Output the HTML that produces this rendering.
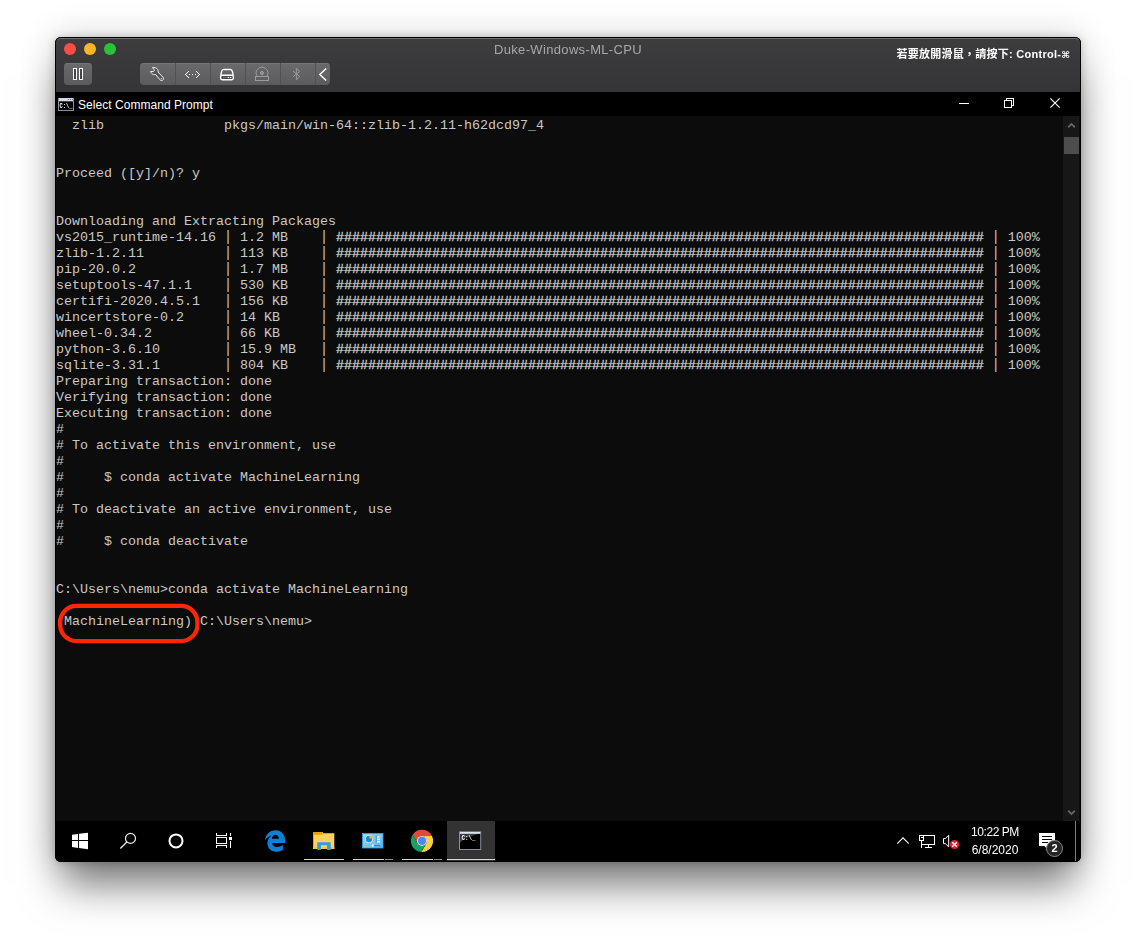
<!DOCTYPE html>
<html lang="zh-Hant">
<head>
<meta charset="utf-8">
<title>Duke-Windows-ML-CPU</title>
<style>
html,body{margin:0;padding:0;background:#fff;}
body{width:1136px;height:935px;position:relative;overflow:hidden;font-family:"Liberation Sans","Noto Sans CJK TC",sans-serif;}
#shadow{position:absolute;left:55px;top:37px;width:1026px;height:825px;border-radius:6px;background:#000;
  box-shadow:0 30px 39px -7px rgba(0,0,0,.5),0 0 8px rgba(0,0,0,.2),0 0 36px rgba(0,0,0,.16);}
#win{position:absolute;left:55px;top:37px;width:1026px;height:825px;border-radius:6px;background:#000;overflow:hidden;}
#mac{will-change:transform;position:absolute;left:1px;top:1px;width:1024px;height:54px;border-radius:5px 5px 0 0;background:linear-gradient(#3d3d3f,#343436);}
#machl{position:absolute;left:0;top:0;width:1024px;height:10px;border-top:1px solid #717173;border-radius:5px 5px 0 0;box-sizing:border-box;}
.tl{position:absolute;top:5px;width:12px;height:12px;border-radius:50%;}
#mtitle{position:absolute;left:0;width:1024px;top:4px;letter-spacing:0.34px;height:16px;line-height:16px;text-align:center;font-size:13px;color:#a8a8a9;}
#mhint{position:absolute;right:10px;top:8px;letter-spacing:0.26px;height:16px;line-height:16px;font-size:11px;font-weight:bold;color:#fff;white-space:nowrap;}
.tb{position:absolute;top:25px;height:22px;background:linear-gradient(#6a6a6c,#5b5b5d);box-shadow:inset 0 1px 0 #757577;}
.dv{position:absolute;top:25px;width:1px;height:22px;background:#515153;}
#wt{position:absolute;left:0;top:55px;width:1026px;height:24px;background:#000;}
#wtitle{position:absolute;left:23px;top:5px;letter-spacing:0.04px;height:16px;line-height:16px;font-size:12px;color:#fff;white-space:nowrap;}
#con{position:absolute;left:1px;top:79px;width:1024px;height:705px;background:#0c0c0c;}
#con pre{position:absolute;left:0;top:2px;margin:0;font-family:"Liberation Mono",monospace;font-size:13.33px;line-height:16px;color:#c8c8c8;white-space:pre;}
.h{-webkit-text-stroke:0.35px #c8c8c8;}
.p{display:inline-block;transform:translateY(1px) scaleY(1.167);transform-origin:50% 14px;}
#sb{position:absolute;left:1008px;top:79px;width:16px;height:705px;background:#171717;}
#thumb{position:absolute;left:1px;top:21px;width:15px;height:17px;background:#4d4d4d;}
#task{will-change:transform;position:absolute;left:0;top:784px;width:1026px;height:41px;background:#000;}
#cmdbtn{position:absolute;left:392px;top:0;width:48px;height:40px;background:#333;}
.ul{position:absolute;top:38px;height:1px;background:#d8d8d8;}
.ul2{position:absolute;top:38px;height:1px;background:#8e8e8e;}
.clk{position:absolute;left:905px;width:70px;height:16px;line-height:16px;font-size:12px;color:#fff;text-align:center;white-space:nowrap;}
#sd{position:absolute;left:1020px;top:0;width:1px;height:40px;background:#7c7c7c;}
#ov{position:absolute;left:0;top:0;width:1136px;height:935px;overflow:visible;}
#ov text{font-family:"Liberation Sans",sans-serif;}
</style>
</head>
<body>
<div id="shadow"></div>
<div id="win">
  <div id="mac">
    <div id="machl"></div>
    <div class="tl" style="left:8px;background:#fd4b45;"></div>
    <div class="tl" style="left:28px;background:#fdb526;"></div>
    <div class="tl" style="left:48px;background:#2ac13d;"></div>
    <div id="mtitle">Duke-Windows-ML-CPU</div>
    <div id="mhint">若要放開滑鼠，請按下: Control-<span style="font-family:'DejaVu Sans',sans-serif;font-size:9.5px;font-weight:bold;letter-spacing:0;">⌘</span></div>
    <div class="tb" style="left:8px;width:28px;border-radius:4px;"></div>
    <div class="tb" style="left:84px;width:190px;border-radius:4px;"></div>
    <div class="dv" style="left:119px;"></div>
    <div class="dv" style="left:154px;"></div>
    <div class="dv" style="left:189px;"></div>
    <div class="dv" style="left:224px;"></div>
    <div class="dv" style="left:259px;"></div>
  </div>
  <div id="wt">
    <div id="wtitle">Select Command Prompt</div>
  </div>
  <div id="con">
<pre>  zlib               pkgs/main/win-64::zlib-1.2.11-h62dcd97_4


Proceed ([y]/n)? y


Downloading and Extracting Packages
vs2015_runtime-14.16 <span class="p">|</span> 1.2 MB    <span class="p">|</span> <span class="h">#################################################################################</span> <span class="p">|</span> 100%
zlib-1.2.11          <span class="p">|</span> 113 KB    <span class="p">|</span> <span class="h">#################################################################################</span> <span class="p">|</span> 100%
pip-20.0.2           <span class="p">|</span> 1.7 MB    <span class="p">|</span> <span class="h">#################################################################################</span> <span class="p">|</span> 100%
setuptools-47.1.1    <span class="p">|</span> 530 KB    <span class="p">|</span> <span class="h">#################################################################################</span> <span class="p">|</span> 100%
certifi-2020.4.5.1   <span class="p">|</span> 156 KB    <span class="p">|</span> <span class="h">#################################################################################</span> <span class="p">|</span> 100%
wincertstore-0.2     <span class="p">|</span> 14 KB     <span class="p">|</span> <span class="h">#################################################################################</span> <span class="p">|</span> 100%
wheel-0.34.2         <span class="p">|</span> 66 KB     <span class="p">|</span> <span class="h">#################################################################################</span> <span class="p">|</span> 100%
python-3.6.10        <span class="p">|</span> 15.9 MB   <span class="p">|</span> <span class="h">#################################################################################</span> <span class="p">|</span> 100%
sqlite-3.31.1        <span class="p">|</span> 804 KB    <span class="p">|</span> <span class="h">#################################################################################</span> <span class="p">|</span> 100%
Preparing transaction: done
Verifying transaction: done
Executing transaction: done
#
# To activate this environment, use
#
#     $ conda activate MachineLearning
#
# To deactivate an active environment, use
#
#     $ conda deactivate


C:\Users\nemu&gt;conda activate MachineLearning

(MachineLearning) C:\Users\nemu&gt;</pre>
  </div>
  <div id="sb"><div id="thumb"></div></div>
  <div id="task">
    <div id="cmdbtn"></div>
    <div class="ul" style="left:249px;width:40px;"></div>
    <div class="ul" style="left:298px;width:31px;"></div><div class="ul2" style="left:330px;width:8px;"></div>
    <div class="ul" style="left:347px;width:31px;"></div><div class="ul2" style="left:379px;width:8px;"></div>
    <div class="ul" style="left:392px;width:48px;"></div>
    <div class="clk" style="top:3px;letter-spacing:-0.45px;">10:22 PM</div>
    <div class="clk" style="top:21px;">6/8/2020</div>
    <div id="sd"></div>
  </div>
</div>
<svg id="ov" viewBox="0 0 1136 935" width="1136" height="935">
<!--ICONS-->
<!-- mac toolbar: pause -->
<g fill="#454547" stroke="#fff" stroke-width="1">
  <rect x="73.5" y="68.5" width="3" height="11"/>
  <rect x="79.5" y="68.5" width="3" height="11"/>
</g>
<!-- wrench -->
<path d="M152.3,67.6 C154,67.2 156.6,67.6 157.7,69.6 C158.2,70.6 158.2,71.4 158.1,72.1 L163,77.3 C163.8,78.2 163.7,79.4 162.9,80.1 C162.1,80.8 160.7,80.7 160,79.8 L155.7,74.5 C154.2,74.7 152.7,74.4 151.6,73.3 C151,72.7 150.6,72 150.5,71.6 L153.6,71.5 C154.5,70.9 154.6,69.9 154.1,69.3 Z" fill="#545456" stroke="#f2f2f2" stroke-width="1" stroke-linejoin="round"/>
<circle cx="161.45" cy="78.55" r="0.6" fill="#fff"/>
<!-- <..> -->
<g fill="#fff" shape-rendering="crispEdges">
  <rect x="185" y="74" width="1" height="1"/><rect x="186" y="73" width="1" height="1"/><rect x="187" y="72" width="1" height="1"/><rect x="188" y="71" width="1" height="1"/>
  <rect x="186" y="75" width="1" height="1"/><rect x="187" y="76" width="1" height="1"/><rect x="188" y="77" width="1" height="1"/>
  <rect x="189" y="74" width="1" height="1"/><rect x="192" y="74" width="1" height="1"/><rect x="195" y="74" width="1" height="1"/>
  <rect x="199" y="74" width="1" height="1"/><rect x="198" y="73" width="1" height="1"/><rect x="197" y="72" width="1" height="1"/><rect x="196" y="71" width="1" height="1"/>
  <rect x="198" y="75" width="1" height="1"/><rect x="197" y="76" width="1" height="1"/><rect x="196" y="77" width="1" height="1"/>
</g>
<!-- drive -->
<g fill="none" stroke="#fff" stroke-width="1.4" stroke-linejoin="round">
  <path d="M220.8,75.3 C221.2,72.5 221.8,69.5 223.4,69.5 H230.6 C232.2,69.5 232.8,72.5 233.2,75.3"/>
  <rect x="220.6" y="75.3" width="12.8" height="4.4" rx="1.6" fill="#4a4a4c"/>
</g>
<circle cx="228.4" cy="77.5" r="0.8" fill="#fff"/><circle cx="230.6" cy="77.5" r="0.8" fill="#fff"/>
<rect x="223" y="77" width="4" height="1" fill="#6a6a6c"/>
<!-- cd -->
<g fill="none" stroke="#9b9b9d" stroke-width="1">
  <path d="M257,76 A5.8,5.8 0 1 1 267,76"/>
  <circle cx="262" cy="73" r="1.6" fill="#8a8a8c"/>
  <rect x="255.5" y="76.5" width="13" height="4"/>
</g>
<!-- bluetooth -->
<path d="M293,71.2 L299.8,76.6 L296.4,79.8 V68.3 L299.8,71.5 L293,76.8" fill="none" stroke="#9a9a9c" stroke-width="1" stroke-linejoin="miter"/>
<!-- chevron -->
<path d="M326.2,68.4 L319.8,74.5 L326.2,80.6" fill="none" stroke="#fff" stroke-width="1.4"/>

<!-- cmd title icon -->
<rect x="58" y="98" width="16" height="13" fill="#8b8e95"/>
<rect x="59" y="98" width="14" height="3" fill="#d3d8e2"/>
<rect x="68" y="99" width="1" height="1" fill="#6f7c9a"/><rect x="70" y="99" width="1" height="1" fill="#6f7c9a"/><rect x="72" y="99" width="1" height="1" fill="#6f7c9a"/>
<rect x="59" y="101.5" width="14" height="8.5" fill="#000"/>
<text x="59.6" y="108.3" font-size="7.5" font-weight="bold" fill="#fff" style="font-family:'Liberation Mono',monospace" textLength="13" lengthAdjust="spacingAndGlyphs">C:\_</text>

<!-- window buttons -->
<g shape-rendering="crispEdges" fill="none" stroke="#fff" stroke-width="1">
  <path d="M959,103.5 H969"/>
  <rect x="1004.5" y="100.5" width="7" height="7"/>
  <path d="M1006.5,100 V98.5 H1013.5 V105.5 H1012"/>
</g>
<path d="M1050.3,98.3 L1059.7,107.7 M1059.7,98.3 L1050.3,107.7" stroke="#fff" stroke-width="1.1" fill="none"/>

<!-- scrollbar arrows -->
<path d="M1068.2,127.3 L1071.5,124 L1074.8,127.3" fill="none" stroke="#6a6a6a" stroke-width="1.7"/>
<path d="M1068.2,810.7 L1071.5,814 L1074.8,810.7" fill="none" stroke="#6a6a6a" stroke-width="1.7"/>

<!-- start -->
<g fill="#fff">
  <path d="M72,834.8 L78,833.95 V840 H72 Z"/>
  <path d="M79,833.8 L88,832.7 V840 H79 Z"/>
  <path d="M72,841 H78 V847.95 L72,847.1 Z"/>
  <path d="M79,841 H88 V849.2 L79,848.1 Z"/>
</g>
<!-- search -->
<g fill="none" stroke="#ececec" stroke-width="1.2">
  <circle cx="130.5" cy="838.4" r="5"/>
  <path d="M126.8,842 L120.4,848.5"/>
</g>
<!-- cortana -->
<circle cx="176" cy="840.9" r="6.5" fill="none" stroke="#fff" stroke-width="2"/>
<!-- task view -->
<g fill="none" stroke="#fff" stroke-width="1" shape-rendering="crispEdges">
  <path d="M216.5,833 V835.5 H226.5 V833"/>
  <rect x="216.5" y="837.5" width="10" height="6"/>
  <path d="M216.5,848 V845.5 H226.5 V848"/>
  <path d="M230.5,833 V836 M230.5,841 V848"/>
</g>
<rect x="229" y="837" width="3" height="3" fill="#fff"/>
<!-- edge -->
<path fill-rule="evenodd" fill="#0a82dc" d="M265,839.9 C265.6,835 269.5,830.2 275.5,830.2 C281.5,830.2 285.1,834.5 285.1,840.5 V843 H272.1 C272.4,845.5 274.4,846.9 277,846.9 C279.2,846.9 281.2,846.2 282.9,845 V850 C281,851.1 278.8,851.7 276.3,851.7 C270.8,851.7 267.4,848 267.4,843 C267.4,840 268.8,837.3 271.8,835.4 C268.8,836.2 266.5,837.8 265,839.9 Z M271.9,838.7 H278.9 C278.8,836.3 277.5,834.7 275.3,834.7 C273.3,834.7 272.2,836.5 271.9,838.7 Z"/>
<!-- folder -->
<path d="M313.2,832.6 Q313.2,832 313.8,832 H322.2 L323.4,833.2 H334.3 V849 H313.2 Z" fill="#ffd25c"/>
<path d="M313.2,832.6 Q313.2,832 313.8,832 H322.2 L323.4,833.2 L321.6,834.8 H313.2 Z" fill="#eaa300"/>
<rect x="313.2" y="847" width="21.1" height="2" fill="#fcc63a"/>
<path d="M317.2,849.9 V843.2 Q317.2,842.2 318.2,842.2 H329.8 Q330.8,842.2 330.8,843.2 V849.9 H327 V845.3 H321 V849.9 Z" fill="#3a98e6"/>
<!-- control panel -->
<defs><linearGradient id="cpg" x1="0" y1="0" x2="1" y2="1"><stop offset="0" stop-color="#9bdcff"/><stop offset="1" stop-color="#4fb6f6"/></linearGradient></defs>
<rect x="362.5" y="833.5" width="20.5" height="14.5" fill="url(#cpg)" stroke="#2ea2f2" stroke-width="0.8"/>
<circle cx="369" cy="839" r="3.9" fill="#d8eefc"/>
<circle cx="369" cy="839" r="3.2" fill="#1c86d6"/>
<path d="M369.4,838.6 V835.4 A3.2,3.2 0 0 1 372.6,838.6 Z" fill="#ffb320"/>
<g fill="#eaf6ff"><rect x="376.5" y="836.2" width="3.6" height="1.5"/><rect x="376.5" y="838.6" width="3.6" height="1.5"/><rect x="376.5" y="841" width="3.6" height="1.5"/></g>
<rect x="375.8" y="835.4" width="0.9" height="7.4" fill="#2a90e0"/>
<rect x="379.3" y="836.3" width="1.1" height="1.1" fill="#f0962a"/>
<rect x="365.3" y="845" width="6" height="1.2" fill="#e8a83a"/>
<rect x="371.8" y="844.3" width="1.8" height="2.4" fill="#e6f4ff"/>
<rect x="374.2" y="845" width="6" height="1.2" fill="#1f86dc"/>
<!-- chrome -->
<path d="M412.69,834.77 A11.15,11.15 0 0 1 431.97,835.90 L422.00,835.90 A5.0,5.0 0 0 0 417.67,843.40 Z" fill="#dd4b3e"/>
<path d="M431.97,835.90 A11.15,11.15 0 0 1 421.35,852.03 L426.33,843.40 A5.0,5.0 0 0 0 422.00,835.90 Z" fill="#ffcd40"/>
<path d="M421.35,852.03 A11.15,11.15 0 0 1 412.69,834.77 L417.67,843.40 A5.0,5.0 0 0 0 426.33,843.40 Z" fill="#19a15f"/>
<circle cx="422" cy="840.9" r="5.0" fill="#f1f1f1"/>
<circle cx="422" cy="840.9" r="4.05" fill="#4a8af4"/>
<!-- cmd taskbar icon -->
<rect x="459" y="831.3" width="22.2" height="18.7" fill="#8a8e96"/>
<rect x="460" y="832" width="20.2" height="1.6" fill="#dfe4ee"/>
<rect x="460" y="834" width="20.2" height="15" fill="#000"/>
<path d="M460,834 H478 C472,836 464,838 460,843 Z" fill="#3c3c3c"/>
<text x="461.6" y="840.4" font-size="7" font-weight="bold" fill="#fff" style="font-family:'Liberation Mono',monospace" textLength="14" lengthAdjust="spacingAndGlyphs">C:\_</text>
<!-- tray chevron -->
<path d="M897.3,843.6 L903,837.9 L908.7,843.6" fill="none" stroke="#fff" stroke-width="1.1"/>
<!-- network -->
<g fill="none" stroke="#fff" stroke-width="1" shape-rendering="crispEdges">
  <path d="M923.5,835.5 H934.5 V844.5 H922"/>
  <rect x="919.5" y="835.5" width="4" height="5"/>
  <path d="M921.5,840.5 V848"/>
  <path d="M928.5,844.5 V847.5 M924.5,847.5 H931.5"/>
  <path d="M921,837.5 H922.5"/>
</g>
<!-- volume -->
<path d="M943.5,838.5 H945.3 L948.7,835.3 V846.8 L945.3,843.6 H943.5 Z" fill="none" stroke="#fff" stroke-width="1"/>
<circle cx="954.5" cy="844.5" r="4.6" fill="#e81d2e"/>
<path d="M952.2,842.2 L956.8,846.8 M956.8,842.2 L952.2,846.8" stroke="#fff" stroke-width="1.3" fill="none"/>
<!-- notification -->
<path d="M1039,833 H1055 V846 H1047.5 V849.3 L1044.2,846 H1039 Z" fill="#fff"/>
<g fill="#000"><rect x="1042" y="836" width="10" height="1"/><rect x="1042" y="839" width="10" height="1"/><rect x="1042" y="842" width="6" height="1"/></g>
<circle cx="1054.5" cy="848.5" r="8" fill="#242424" stroke="#8a8a8a" stroke-width="1"/>
<text x="1054.5" y="852.3" font-size="11" font-weight="bold" fill="#fff" text-anchor="middle">2</text>
<!-- annotation ring -->
<rect x="60.15" y="605.95" width="137.3" height="35.1" rx="16.4" ry="16.4" fill="none" stroke="#ff2600" stroke-width="4.3"/>
</svg>
</body>
</html>
